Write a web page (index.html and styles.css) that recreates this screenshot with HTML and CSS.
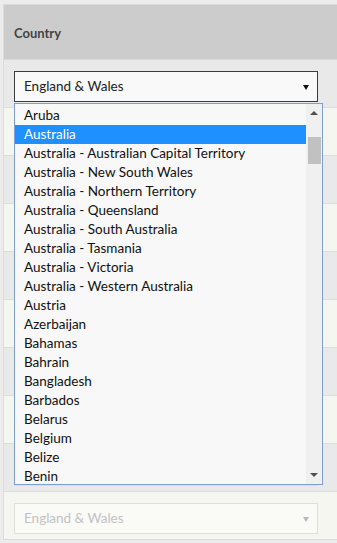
FILE: index.html
```html
<!DOCTYPE html>
<html lang="en">
<head>
  <meta charset="UTF-8" />
  <meta name="viewport" content="width=device-width, initial-scale=1.0"/>
  <title>Country</title>
  <link rel="stylesheet" href="styles.css">
</head>
<body>
  <div class="grid">
    <div class="grid-head">Country</div>

    <div class="grid-row">
      <div class="select-wrap">
        <div class="select is-open">England &amp; Wales<span class="caret"></span></div>
        <div class="dropdown">
          <ul class="options">
            <li>Aruba</li>
            <li class="selected">Australia</li>
            <li>Australia - Australian Capital Territory</li>
            <li>Australia - New South Wales</li>
            <li>Australia - Northern Territory</li>
            <li>Australia - Queensland</li>
            <li>Australia - South Australia</li>
            <li>Australia - Tasmania</li>
            <li>Australia - Victoria</li>
            <li>Australia - Western Australia</li>
            <li>Austria</li>
            <li>Azerbaijan</li>
            <li>Bahamas</li>
            <li>Bahrain</li>
            <li>Bangladesh</li>
            <li>Barbados</li>
            <li>Belarus</li>
            <li>Belgium</li>
            <li>Belize</li>
            <li>Benin</li>
          </ul>
          <div class="scrollbar">
            <span class="arrow up"></span>
            <span class="thumb"></span>
            <span class="arrow down"></span>
          </div>
        </div>
      </div>
    </div>
    <div class="grid-row alt"><div class="select">England &amp; Wales<span class="caret"></span></div></div>
    <div class="grid-row"><div class="select">England &amp; Wales<span class="caret"></span></div></div>
    <div class="grid-row alt"><div class="select">England &amp; Wales<span class="caret"></span></div></div>
    <div class="grid-row"><div class="select">England &amp; Wales<span class="caret"></span></div></div>
    <div class="grid-row alt"><div class="select">England &amp; Wales<span class="caret"></span></div></div>
    <div class="grid-row"><div class="select">England &amp; Wales<span class="caret"></span></div></div>
    <div class="grid-row alt"><div class="select">England &amp; Wales<span class="caret"></span></div></div>
    <div class="grid-row"><div class="select">England &amp; Wales<span class="caret"></span></div></div>
    <div class="grid-row alt"><div class="select disabled">England &amp; Wales<span class="caret"></span></div></div>
  </div>
</body>
</html>
```

FILE: styles.css
```css
* {
  box-sizing: border-box;
}

body {
  margin: 0;
  padding: 4px 0 0 0;
  background: #ececec;
  font-family: 'Lato', 'Liberation Sans', sans-serif;
  color: #222;
  overflow: hidden;
}

.grid {
  margin-left: 3px;
  border-left: 1px solid #dcdcdc;
  border-top: 1px solid #dcdcdc;
}

.grid-head {
  height: 55px;
  background: #cccccc;
  padding: 2px 0 0 10px;
  display: flex;
  align-items: center;
  font-weight: bold;
  font-size: 13px;
  color: #444;
  border-bottom: 1px solid #d8d8d8;
}

.grid-row {
  height: 48px;
  padding: 11px 19px 0 10px;
  background: #e9e9e9;
  border-bottom: 1px solid #dddddd;
}

.grid-row.alt {
  background: #f6f6f1;
}

.select-wrap {
  position: relative;
}

.select {
  height: 31px;
  border: 1px solid #dedede;
  background: #f9f9f9;
  padding: 0 0 0 9px;
  font-size: 13.5px;
  line-height: 29px;
  position: relative;
  color: #222;
}

.select.is-open {
  border-color: #3c3c3c;
}

.caret {
  position: absolute;
  right: 8px;
  top: 13px;
  border-left: 3px solid transparent;
  border-right: 3px solid transparent;
  border-top: 5px solid #111;
}

.select.disabled {
  color: #c2c2c2;
  background: #fafaf7;
}

.select.disabled .caret {
  border-top-color: #b8b8b8;
}

.dropdown {
  position: absolute;
  top: 32px;
  left: 0;
  width: 309px;
  height: 382px;
  border: 1px solid #7f9ed6;
  background: #f8f8f8;
  display: flex;
  z-index: 2;
}

.options {
  list-style: none;
  margin: 0;
  padding: 2px 0 0 0;
  flex: 1;
  overflow: hidden;
}

.options li {
  height: 19px;
  line-height: 19px;
  padding-left: 9px;
  font-size: 13.5px;
  color: #111;
  white-space: nowrap;
}

.options li.selected {
  background: #1e90ff;
  color: #fff;
}

.scrollbar {
  width: 16px;
  background: #f0f0f0;
  position: relative;
}

.thumb {
  position: absolute;
  left: 2px;
  top: 33px;
  width: 13px;
  height: 27px;
  background: #c1c1c1;
}

.arrow {
  position: absolute;
  left: 4px;
  border-left: 4px solid transparent;
  border-right: 4px solid transparent;
}

.arrow.up {
  top: 7px;
  border-bottom: 4px solid #505050;
}

.arrow.down {
  bottom: 7px;
  border-top: 4px solid #505050;
}
```
